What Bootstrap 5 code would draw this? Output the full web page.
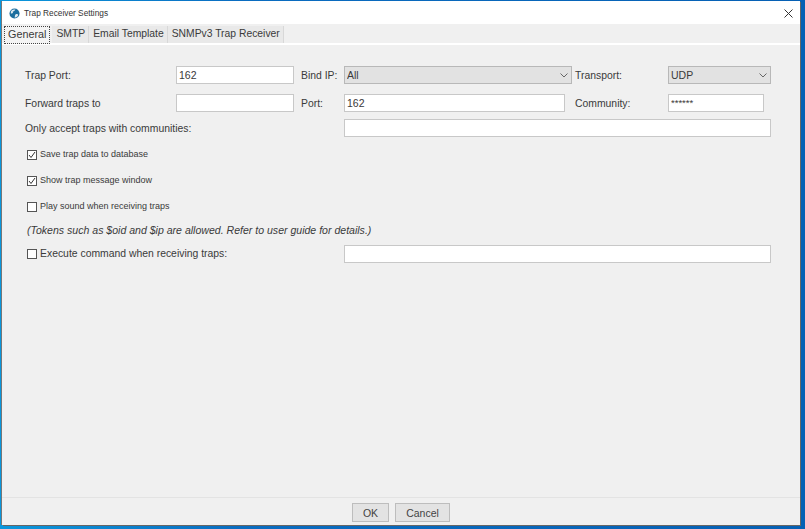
<!DOCTYPE html>
<html lang="en">
<head>
    <meta charset="UTF-8">
    <meta name="viewport" content="width=device-width, initial-scale=1.0">
    <title>Trap Receiver Settings</title>
    <link href="https://cdn.jsdelivr.net/npm/bootstrap@5.3.0/dist/css/bootstrap.min.css" rel="stylesheet">
    <style>
        html, body { height: 100%; }
        body {
            background: linear-gradient(to right, #0b97dc, #0a6cc0 30%, #0660b4);
            font-family: "Liberation Sans", Arial, sans-serif;
            font-size: 10.4px;
            color: #3a3a3a;
            overflow: hidden;
        }
        .app-window {
            width: 798px;
            height: 524px;
            margin: 1px 0 0 2px;
            background: #f0f0f0;
            box-shadow: 1px 1px 0 #666, -1px 0 0 #777;
        }
        .title-bar { height: 23px; background: #fff; padding: 1px 6px 0 7px; }
        .title-text { font-size: 8.3px; color: #333; margin-left: 4px; }
        .close-x { margin-right: 1px; }
        .tab-strip { height: 21px; padding: 2px 0 0 2px; border-bottom: 2px solid #fff; font-size: 10.35px; }
        .tab-item {
            height: 17px;
            line-height: 16px;
            padding: 0 3px 0 4px;
            background: #e9e9e9;
            border-right: 1px solid #d8d8d8;
        }
        .tab-on {
            height: 18px;
            background: #f4f4f4;
            border: 1px dotted #444;
            padding: 0 3px;
            margin-right: 2px;
            line-height: 14px;
            font-size: 10.8px;
        }
        .form-area { padding: 21px 0 0 23px; }
        .field-row { height: 18px; margin-bottom: 10px; }
        .field-row.tight { margin-bottom: 7px; }
        .field-row > span { padding-top: 1px; }
        .lbl-a { width: 151px; }
        .lbl-b { width: 43px; margin-left: 7px; }
        .lbl-c { width: 93px; }
        .gap-c { margin-left: 3px; }
        .gap-d { margin-left: 10px; }
        .form-control.fld, .form-select.fld {
            height: 18px;
            min-height: 0;
            font-size: 10.5px;
            line-height: 14px;
            padding: 0 2px;
            border: 1px solid #c8c8c8;
            border-radius: 0;
            color: #3a3a3a;
            box-shadow: none;
        }
        .form-select.fld {
            background-color: #e2e2e2;
            background-image: url("data:image/svg+xml,%3csvg xmlns='http://www.w3.org/2000/svg' viewBox='0 0 8 5'%3e%3cpath fill='none' stroke='%23666' d='M.5.5L4 4 7.500.5'/%3e%3c/svg%3e");
            background-position: right 3px center;
            background-size: 8px 5px;
            border-color: #b8b8b8;
        }
        .w-118 { width: 118px; flex: none; }
        .w-228 { width: 228px; flex: none; }
        .w-221 { width: 221px; flex: none; }
        .w-103 { width: 103px; flex: none; }
        .w-96 { width: 96px; flex: none; }
        .w-427 { width: 427px; flex: none; }
        .lbl-wide { width: 319px; }
        .pw-text.form-control.fld { font-size: 9.500px; padding-bottom: 2px; }
        .chk-row { height: 12px; margin: 0 0 14px 2px; font-size: 9px; }
        .chk-first { margin-top: 12px; }
        .chk-box {
            width: 10px;
            height: 10px;
            border: 1px solid #555;
            background: #fff;
            margin-right: 3px;
            flex: none;
        }
        .hint-row { font-style: italic; font-size: 10.56px; margin: -4px 0 8px 2px; height: 14px; line-height: 14px; }
        .exec-row { margin-left: 2px; height: 18px; }
        .exec-label { width: 317px; }
        .exec-label span { white-space: nowrap; }
        .btn-bar { height: 28px; border-top: 1px solid #e3e3e3; padding-top: 5px; }
        .btn.act {
            height: 19px;
            padding: 0;
            font-size: 10.5px;
            line-height: 16px;
            color: #444;
            background: #e3e3e3;
            border: 1px solid #bdbdbd;
            border-radius: 0;
        }
        .btn-ok { width: 37px; margin-right: 6px; }
        .btn-cancel { width: 55px; }
    </style>
</head>
<body>
    <div class="app-window d-flex flex-column">
        <!-- Title bar -->
        <div class="title-bar d-flex align-items-center">
            <svg width="11" height="11" viewBox="0 0 12 12">
                <circle cx="6" cy="6" r="5.500" fill="#1d6f9f"/>
                <path d="M2 4c1-2 3-3 5-2-1 1-2 2-3 2 1 1 0 2-2 2zM7 7c2-1 3 0 3 1-1 2-3 3-4 2 1-1 0-2 1-3z" fill="#dfeaf0"/>
            </svg>
            <span class="title-text flex-grow-1">Trap Receiver Settings</span>
            <svg class="close-x" width="9" height="9" viewBox="0 0 9 9">
                <path d="M.5.5l8 8M8.500.5l-8 8" stroke="#333" stroke-width="1" fill="none"/>
            </svg>
        </div>

        <!-- Tabs -->
        <div class="tab-strip d-flex">
            <div class="tab-on">General</div>
            <div class="tab-item">SMTP</div>
            <div class="tab-item">Email Template</div>
            <div class="tab-item">SNMPv3 Trap Receiver</div>
        </div>

        <!-- General tab -->
        <div class="form-area flex-grow-1">
            <div class="field-row d-flex align-items-center">
                <span class="lbl-a">Trap Port:</span>
                <input class="form-control fld w-118" value="162">
                <span class="lbl-b">Bind IP:</span>
                <select class="form-select fld w-228"><option>All</option></select>
                <span class="lbl-c gap-c">Transport:</span>
                <select class="form-select fld w-103"><option>UDP</option></select>
            </div>
            <div class="field-row tight d-flex align-items-center">
                <span class="lbl-a">Forward traps to</span>
                <input class="form-control fld w-118">
                <span class="lbl-b">Port:</span>
                <input class="form-control fld w-221" value="162">
                <span class="lbl-c gap-d">Community:</span>
                <input class="form-control fld w-96 pw-text" value="******">
            </div>
            <div class="field-row d-flex align-items-center">
                <span class="lbl-wide">Only accept traps with communities:</span>
                <input class="form-control fld w-427">
            </div>

            <div class="chk-row chk-first d-flex align-items-center">
                <span class="chk-box d-flex">
                    <svg width="8" height="8" viewBox="0 0 8 8"><path d="M1 4l2 2.500L7 1" stroke="#333" fill="none"/></svg>
                </span>
                Save trap data to database
            </div>
            <div class="chk-row d-flex align-items-center">
                <span class="chk-box d-flex">
                    <svg width="8" height="8" viewBox="0 0 8 8"><path d="M1 4l2 2.500L7 1" stroke="#333" fill="none"/></svg>
                </span>
                Show trap message window
            </div>
            <div class="chk-row d-flex align-items-center">
                <span class="chk-box"></span>
                Play sound when receiving traps
            </div>
            <div class="hint-row">(Tokens such as $oid and $ip are allowed. Refer to user guide for details.)</div>
            <div class="exec-row d-flex align-items-center">
                <div class="exec-label d-flex align-items-center">
                    <span class="chk-box"></span>
                    <span>Execute command when receiving traps:</span>
                </div>
                <input class="form-control fld w-427">
            </div>
        </div>

        <!-- Buttons -->
        <div class="btn-bar d-flex justify-content-center">
            <button type="button" class="btn act btn-ok">OK</button>
            <button type="button" class="btn act btn-cancel">Cancel</button>
        </div>
    </div>

    <script src="https://cdn.jsdelivr.net/npm/bootstrap@5.3.0/dist/js/bootstrap.bundle.min.js"></script>
</body>
</html>
